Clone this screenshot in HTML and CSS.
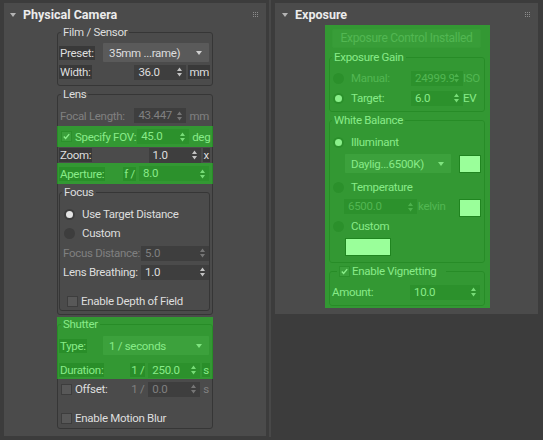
FILE: index.html
```html
<!DOCTYPE html>
<html>
<head>
<meta charset="utf-8">
<title>Physical Camera</title>
<link rel="stylesheet" href="styles.css">
</head>
<body>
<div class="app">
  <section class="rollout left">
    <div class="head">
      <svg class="tri" viewBox="0 0 6 4"><path d="M0 0H6L3 4Z"/></svg>
      <span class="title">Physical Camera</span>
      <svg class="grip" viewBox="0 0 5 5"><path d="M0 0h1v1H0zM2 0h1v1H2zM4 0h1v1H4zM0 2h1v1H0zM2 2h1v1H2zM4 2h1v1H4zM0 4h1v1H0zM2 4h1v1H2zM4 4h1v1H4z"/></svg>
    </div>
    <div class="col">
      <fieldset class="grp film">
        <legend>Film / Sensor</legend>
        <div class="row tall first-film">
          <span class="lbl dark">Preset:</span>
          <div class="drop">35mm ...rame)<svg class="darr" viewBox="0 0 6 4"><path d="M0 0H6L3 4Z"/></svg></div>
        </div>
        <div class="row m2">
          <span class="lbl dark">Width:</span>
          <span class="spin"><span class="v">36.0</span><svg class="arr" viewBox="0 0 5 10"><path d="M0 4L2.5 .5L5 4ZM0 6L2.5 9.5L5 6Z"/></svg></span>
          <span class="unit dark">mm</span>
        </div>
      </fieldset>

      <fieldset class="grp lens">
        <legend>Lens</legend>
        <div class="row r17 m6 off">
          <span class="lbl">Focal Length:</span>
          <span class="spin"><span class="v">43.447</span><svg class="arr" viewBox="0 0 5 10"><path d="M0 4L2.5 .5L5 4ZM0 6L2.5 9.5L5 6Z"/></svg></span>
          <span class="unit">mm</span>
        </div>
        <div class="row r21 m2 hl">
          <span class="chk on"><svg viewBox="0 0 11 11"><path d="M2.2 5.6L4.4 7.9L8.8 2.6"/></svg></span>
          <span class="lbl">Specify FOV:</span>
          <span class="spin"><span class="v">45.0</span><svg class="arr" viewBox="0 0 5 10"><path d="M0 4L2.5 .5L5 4ZM0 6L2.5 9.5L5 6Z"/></svg></span>
          <span class="unit">deg</span>
        </div>
        <div class="row">
          <span class="lbl dark">Zoom:</span>
          <span class="spin"><span class="v">1.0</span><svg class="arr" viewBox="0 0 5 10"><path d="M0 4L2.5 .5L5 4ZM0 6L2.5 9.5L5 6Z"/></svg></span>
          <span class="unit dark">x</span>
        </div>
        <div class="row r21 hl">
          <span class="lbl dark">Aperture:</span>
          <span class="pre dark">f /</span>
          <span class="spin long"><span class="v">8.0</span><svg class="arr" viewBox="0 0 5 10"><path d="M0 4L2.5 .5L5 4ZM0 6L2.5 9.5L5 6Z"/></svg></span>
        </div>

        <fieldset class="grp focus">
          <legend>Focus</legend>
          <div class="row m7"><span class="radio on"></span><span class="lbl">Use Target Distance</span></div>
          <div class="row m3"><span class="radio"></span><span class="lbl">Custom</span></div>
          <div class="row m4 off">
            <span class="lbl">Focus Distance:</span>
            <span class="spin fspin"><span class="v">5.0</span><svg class="arr" viewBox="0 0 5 10"><path d="M0 4L2.5 .5L5 4ZM0 6L2.5 9.5L5 6Z"/></svg></span>
          </div>
          <div class="row m3">
            <span class="lbl">Lens Breathing:</span>
            <span class="spin fspin"><span class="v">1.0</span><svg class="arr" viewBox="0 0 5 10"><path d="M0 4L2.5 .5L5 4ZM0 6L2.5 9.5L5 6Z"/></svg></span>
          </div>
          <div class="row m13 dof"><span class="chk"></span><span class="lbl">Enable Depth of Field</span></div>
        </fieldset>
      </fieldset>

      <div class="shutter">
        <fieldset class="grp shut">
          <legend>Shutter</legend>
          <div class="row tall m5">
            <span class="lbl dark">Type:</span>
            <div class="drop">1 / seconds<svg class="darr" viewBox="0 0 6 4"><path d="M0 0H6L3 4Z"/></svg></div>
          </div>
          <div class="row m7">
            <span class="lbl dark">Duration:</span>
            <span class="pre dark">1 /</span>
            <span class="spin"><span class="v">250.0</span><svg class="arr" viewBox="0 0 5 10"><path d="M0 4L2.5 .5L5 4ZM0 6L2.5 9.5L5 6Z"/></svg></span>
            <span class="unit dark">s</span>
          </div>
          <div class="row m3">
            <span class="chk"></span>
            <span class="lbl">Offset:</span>
            <span class="pre off">1 /</span>
            <span class="spin off"><span class="v">0.0</span><svg class="arr" viewBox="0 0 5 10"><path d="M0 4L2.5 .5L5 4ZM0 6L2.5 9.5L5 6Z"/></svg></span>
            <span class="unit off">s</span>
          </div>
          <div class="row m13"><span class="chk"></span><span class="lbl">Enable Motion Blur</span></div>
        </fieldset>
      </div>
    </div>
  </section>

  <div class="splitter"></div>

  <section class="rollout right">
    <div class="head">
      <svg class="tri" viewBox="0 0 6 4"><path d="M0 0H6L3 4Z"/></svg>
      <span class="title">Exposure</span>
      <svg class="grip" viewBox="0 0 5 5"><path d="M0 0h1v1H0zM2 0h1v1H2zM4 0h1v1H4zM0 2h1v1H0zM2 2h1v1H2zM4 2h1v1H4zM0 4h1v1H0zM2 4h1v1H2zM4 4h1v1H4z"/></svg>
    </div>
    <div class="col expo">
      <div class="btn">Exposure Control Installed</div>

      <fieldset class="grp rg gain">
        <legend>Exposure Gain</legend>
        <div class="row m6 off">
          <span class="radio"></span><span class="lbl">Manual:</span>
          <span class="spin clip"><span class="v">24999.9</span><svg class="arr" viewBox="0 0 5 10"><path d="M0 4L2.5 .5L5 4ZM0 6L2.5 9.5L5 6Z"/></svg></span>
          <span class="unit tight">ISO</span>
        </div>
        <div class="row m4">
          <span class="radio on"></span><span class="lbl">Target:</span>
          <span class="spin"><span class="v">6.0</span><svg class="arr" viewBox="0 0 5 10"><path d="M0 4L2.5 .5L5 4ZM0 6L2.5 9.5L5 6Z"/></svg></span>
          <span class="unit tight">EV</span>
        </div>
      </fieldset>

      <fieldset class="grp rg wb">
        <legend>White Balance</legend>
        <div class="row m7"><span class="radio on"></span><span class="lbl">Illuminant</span></div>
        <div class="row tall m4">
          <div class="drop wbdrop">Daylig...6500K)<svg class="darr" viewBox="0 0 6 4"><path d="M0 0H6L3 4Z"/></svg></div>
          <span class="swatch"></span>
        </div>
        <div class="row m6"><span class="radio"></span><span class="lbl">Temperature</span></div>
        <div class="row r18 m4 top off">
          <span class="spin kspin"><span class="v">6500.0</span><svg class="arr" viewBox="0 0 5 10"><path d="M0 4L2.5 .5L5 4ZM0 6L2.5 9.5L5 6Z"/></svg></span>
          <span class="unit kel">kelvin</span>
          <span class="swatch"></span>
        </div>
        <div class="row m1"><span class="radio"></span><span class="lbl">Custom</span></div>
        <div class="row r18 m4"><span class="swatch wide"></span></div>
      </fieldset>

      <fieldset class="grp rg vig">
        <legend><span class="chk on"><svg viewBox="0 0 11 11"><path d="M2.2 5.6L4.4 7.9L8.8 2.6"/></svg></span>Enable Vignetting</legend>
        <div class="row m6 amount">
          <span class="lbl">Amount:</span>
          <span class="spin long"><span class="v">10.0</span><svg class="arr" viewBox="0 0 5 10"><path d="M0 4L2.5 .5L5 4ZM0 6L2.5 9.5L5 6Z"/></svg></span>
        </div>
      </fieldset>
    </div>
  </section>
</div>
</body>
</html>
```

FILE: styles.css
```css
* { box-sizing: border-box; }
html, body { margin: 0; padding: 0; }
body {
  width: 543px;
  height: 440px;
  overflow: hidden;
  background: #3c3c3c;
  font-family: Roboto, "Liberation Sans", Arial, sans-serif;
  font-size: 11.5px;
  letter-spacing: -0.3px;
  color: #dedede;
}

.app { display: flex; align-items: flex-start; padding: 3px 0 0 4px; }

.rollout { background: #4b4b4b; flex: none; }
.rollout.left { width: 262px; height: 433px; }
.rollout.right { width: 263px; height: 311px; }

.splitter {
  flex: none;
  width: 9px;
  height: 437px;
  margin-top: -3px;
  background: linear-gradient(to right, #3c3c3c 0 3px, #484848 3px 5px, #3c3c3c 5px);
}

/* rollout header */
.head { height: 22px; display: flex; align-items: flex-start; }
.tri { flex: none; width: 6px; height: 4px; margin: 10px 0 0 6px; fill: #b4b4b4; }
.right .tri { margin-left: 7px; }
.title { flex: 1; margin: 3px 0 0 7px; font-weight: 700; font-size: 12.5px; letter-spacing: 0; color: #ececec; line-height: 17px; }
.grip { flex: none; width: 5px; height: 5px; margin: 9px 8px 0 0; fill: #8c8c8c; }

.col { margin-left: 53px; width: 156px; padding-top: 1px; }

/* group boxes */
.grp {
  margin: 0;
  padding: 0 1px 0 0;
  border: 1px solid #363636;
  border-radius: 3px;
  min-width: 0;
}
.grp > legend { padding: 0 2px; margin-left: 2px; line-height: 13px; height: 13px; }

.film { padding: 0 2px 5px 1px; }
.lens { margin-top: 2px; padding: 0 2px 3px 1px; }
.focus { margin-top: 2px; padding: 0 0 1px 2px; }
.focus > legend { margin-left: 0; }
.shut { padding: 0 2px 2px 1px; }

/* rows */
.row { display: flex; align-items: center; height: 16px; white-space: nowrap; }
.row.tall { height: 19px; }
.row.r17 { height: 17px; }
.row.r18 { height: 18px; }
.row.r21 { height: 21px; }
.row.top { align-items: flex-start; }
.m1 { margin-top: 1px; }
.m2 { margin-top: 2px; }
.m3 { margin-top: 3px; }
.m4 { margin-top: 4px; }
.m5 { margin-top: 5px; }
.m6 { margin-top: 6px; }
.m7 { margin-top: 7px; }
.m13 { margin-top: 13px; }
.first-film { margin-top: 4px; }

.lbl { line-height: 14px; padding: 0 1px; }
.dark { background: #393939; }
.off, .off .lbl, .lbl.off { color: #808080; }

.pre { margin-left: auto; line-height: 14px; padding: 0 1px; margin-right: 3px; }
.pre + .spin { margin-left: 0; }

/* spinner */
.spin {
  margin-left: auto;
  flex: none;
  width: 52px;
  height: 15px;
  background: #3e3e3e;
  display: flex;
  align-items: center;
  padding: 0 4px 0 4px;
  color: #dedede;
}
.off .spin, .spin.off { color: #808080; }
.spin .v { flex: 1; min-width: 0; overflow: hidden; line-height: 15px; }
.spin.clip .v { text-overflow: clip; }
.arr { flex: none; width: 5px; height: 10px; fill: #c2c2c2; }
.off .arr, .spin.off .arr { fill: #767676; }
.spin.long { width: 70px; margin-right: 1px; }
.spin.fspin { width: 68px; }

.unit { flex: none; margin-left: 2px; line-height: 14px; padding: 0 1px; }
.unit.tight { margin-left: 0; width: 18px; padding: 0; }

/* dropdown */
.drop {
  margin-left: auto;
  margin-right: 1px;
  width: 106px;
  height: 19px;
  background: #5a5a5a;
  border-radius: 1px;
  display: flex;
  align-items: center;
  justify-content: space-between;
  padding: 0 7px 0 6px;
}
.darr { width: 6px; height: 4px; fill: #d0d0d0; }

/* checkbox */
.chk {
  flex: none;
  width: 11px;
  height: 11px;
  margin: 0 2px 0 2px;
  background: #585858;
  border: 1px solid #3d3d3d;
  display: inline-flex;
}
.chk svg { width: 9px; height: 9px; fill: none; stroke: #e2e2e2; stroke-width: 1.7; }
.dof .chk { margin-left: 5px; }

/* radio */
.radio {
  flex: none;
  width: 11px;
  height: 11px;
  border-radius: 50%;
  background: #3d3d3d;
  margin: 0 6px 0 2px;
  display: inline-flex;
  align-items: center;
  justify-content: center;
}
.radio.on::after {
  content: "";
  width: 7px;
  height: 7px;
  border-radius: 50%;
  background: #e4e4e4;
}

/* highlight overlays */
.hl { position: relative; }
.hl::after {
  content: "";
  position: absolute;
  top: 0;
  bottom: 0;
  left: -2px;
  right: -3px;
  background: rgba(20, 255, 20, 0.43);
  pointer-events: none;
}
.shutter { position: relative; margin-top: 3px; }
.shutter::after {
  content: "";
  position: absolute;
  left: 0;
  right: 0;
  top: -1px;
  height: 62px;
  background: rgba(20, 255, 20, 0.43);
  pointer-events: none;
}

/* exposure rollout */
.right .col.expo {
  margin-left: 50px;
  width: 165px;
  padding: 4px 5px 2px 4px;
  position: relative;
}
.expo::after {
  content: "";
  position: absolute;
  inset: 0;
  background: rgba(20, 255, 20, 0.43);
  pointer-events: none;
}
.btn {
  height: 19px;
  margin: 0 4px 0 3px;
  background: #545454;
  border: 1px solid #505050;
  border-radius: 2px;
  color: #808080;
  text-align: center;
  line-height: 17px;
  font-size: 12px;
}
.rg { padding: 0 3px 0 3px; }
.rg > legend { margin-left: -1px; }
.gain { margin-top: 3px; padding-bottom: 5px; }
.wb { margin-top: 2px; padding-bottom: 6px; }
.vig { margin-top: 2px; padding-bottom: 5px; }
.rg .radio { margin: 0 6px 0 0; }
.rg .spin { margin-left: auto; }
.wbdrop { margin-left: 12px; margin-right: 0; }
.swatch { flex: none; width: 22px; height: 18px; background: #ffffff; border: 1px solid #2a2a2a; margin-left: auto; }
.swatch.wide { width: 46px; margin-left: 12px; }
.kspin { width: 73px; margin-left: 11px !important; }
.unit.kel { margin-left: 1px; padding: 0; line-height: 15px; }
.vig > legend { margin-left: 4px; padding: 0 10px 0 2px; display: flex; align-items: center; }
.vig > legend .chk { margin: 0 2px 0 0; }
.amount .lbl { margin-left: -2px; }
```
